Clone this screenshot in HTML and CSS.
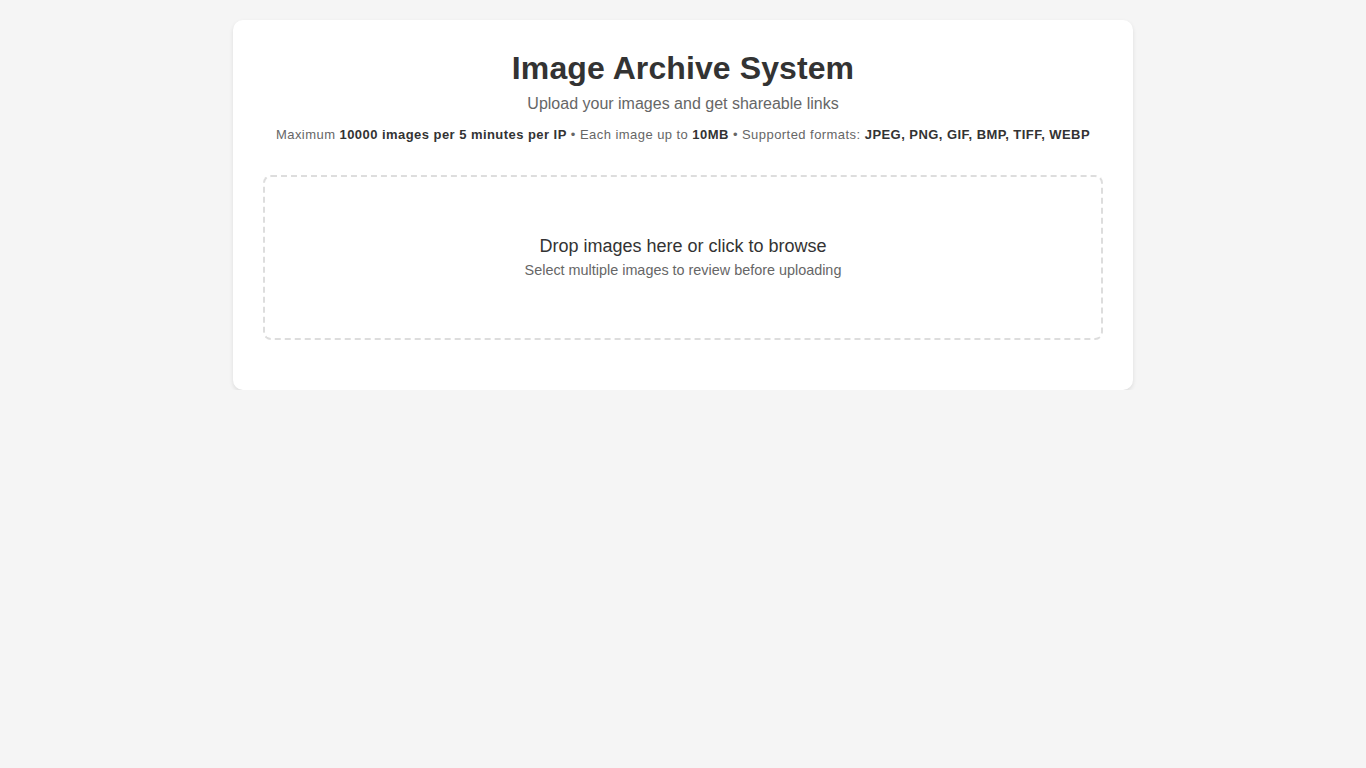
FILE: index.html
```html
<!DOCTYPE html>
<html lang="en">
<head>
<meta charset="utf-8">
<title>Image Archive System</title>
<link rel="stylesheet" href="styles.css">
</head>
<body>
<main class="card">
  <header class="header">
    <h1 class="title">Image Archive System</h1>
    <p class="subtitle">Upload your images and get shareable links</p>
    <p class="limits">Maximum <strong>10000 images per 5 minutes per IP</strong> • Each image up to <strong>10MB</strong> • Supported formats: <strong>JPEG, PNG, GIF, BMP, TIFF, WEBP</strong></p>
  </header>
  <section class="dropzone">
    <p class="drop-main">Drop images here or click to browse</p>
    <p class="drop-sub">Select multiple images to review before uploading</p>
  </section>
</main>
</body>
</html>
```
FILE: styles.css
```css
html, body {
  margin: 0;
  padding: 0;
}
body {
  background: #f5f5f5;
  font-family: "Liberation Sans", Arial, sans-serif;
  color: #333;
  padding-top: 20px;
}
.card {
  width: 900px;
  box-sizing: border-box;
  margin: 0 auto;
  background: #fff;
  border-radius: 10px;
  box-shadow: 0 2px 4px rgba(0, 0, 0, 0.1);
  padding: 30px 30px 50px;
}
.header {
  text-align: center;
  margin-bottom: 32px;
}
.title {
  margin: 0 0 8px;
  font-size: 32px;
  font-weight: bold;
  color: #333;
  line-height: 37px;
  letter-spacing: 0.1px;
}
.subtitle {
  margin: 0 0 14px;
  font-size: 16px;
  line-height: 18px;
  color: #666;
}
.limits {
  margin: 0;
  font-size: 13px;
  letter-spacing: 0.45px;
  line-height: 16px;
  color: #666;
}
.limits strong {
  color: #333;
}
.dropzone {
  border: 2px dashed #ddd;
  border-radius: 8px;
  text-align: center;
  padding: 59px 20px 60px;
}
.drop-main {
  margin: 0 0 5px;
  font-size: 18px;
  line-height: 21px;
  color: #333;
}
.drop-sub {
  margin: 0;
  font-size: 14.4px;
  line-height: 16px;
  color: #666;
}
```
